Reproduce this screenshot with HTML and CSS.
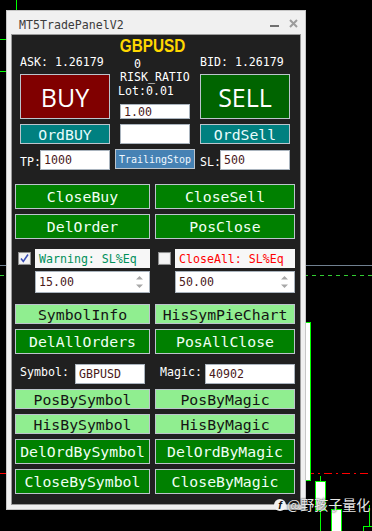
FILE: index.html
```html
<!DOCTYPE html>
<html lang="en">

<head>
    <meta charset="UTF-8">
    <meta name="viewport" content="width=device-width, initial-scale=1.0">
    <title>MT5TradePanelV2</title>
    <link rel="stylesheet" href="styles.css">
</head>

<body>
    <div class="desk">
        <!-- chart behind the panel -->
        <div class="cl ln-top"></div>
        <div class="cl candle-left"></div>
        <div class="cl ln-gray"></div>
        <div class="cl ln-dash"></div>
        <div class="cl ln-red"></div>
        <div class="cl candle c1"></div>
        <div class="cl wick w2"></div>
        <div class="cl candle c2"></div>
        <div class="cl wick w3"></div>
        <div class="cl candle c3"></div>
        <div class="cl wick w4"></div>
        <div class="cl candle c4"></div>

        <div class="window">
            <div class="titlebar">
                <span class="title">MT5TradePanelV2</span>
                <span class="min"></span>
                <svg class="close" width="9" height="9" viewBox="0 0 9 9">
                    <path d="M1 1 L8 8 M8 1 L1 8" stroke="#9c9c9c" stroke-width="2" />
                </svg>
            </div>

            <div class="client">
                <div class="head"><span>GBPUSD</span></div>

                <div class="top">
                    <div class="txt">ASK: 1.26179</div>
                    <div class="txt spread">0</div>
                    <div class="txt">BID: 1.26179</div>

                    <div class="btn big buy">BUY</div>
                    <div class="mid">
                        <div class="txt">RISK_RATIO</div>
                        <div class="txt lot">Lot:0.01</div>
                        <div class="inp small">1.00</div>
                    </div>
                    <div class="btn big sell">SELL</div>

                    <div class="btn teal">OrdBUY</div>
                    <div class="inp"></div>
                    <div class="btn teal">OrdSell</div>

                    <div class="field"><span class="txt">TP:</span><div class="inp">1000</div></div>
                    <div class="btn trail">TrailingStop</div>
                    <div class="field"><span class="txt">SL:</span><div class="inp">500</div></div>
                </div>

                <div class="grid2 actions">
                    <div class="btn act">CloseBuy</div>
                    <div class="btn act">CloseSell</div>
                    <div class="btn act">DelOrder</div>
                    <div class="btn act">PosClose</div>
                </div>

                <div class="grid2 checks">
                    <div class="chk">
                        <svg class="box" width="13" height="13" viewBox="0 0 13 13">
                            <rect x="0.5" y="0.5" width="12" height="12" fill="#e6e6e6" stroke="#8e8f8f" />
                            <rect x="1.5" y="1.5" width="10" height="10" fill="#f4f4f4" />
                            <path d="M3 6.5 L5.3 9.5 L10 2.5" fill="none" stroke="#3b4fb5" stroke-width="1.6" />
                        </svg>
                        <div class="chk-body">
                            <div class="tag warn">Warning: SL%Eq</div>
                            <div class="inp spin">15.00
                                <svg width="7" height="14" viewBox="0 0 7 14">
                                    <path d="M3.5 1 L7 4.5 L0 4.5 Z M0 9.5 L7 9.5 L3.5 13 Z" fill="#a8a8a8" />
                                </svg>
                            </div>
                        </div>
                    </div>
                    <div class="chk">
                        <svg class="box" width="13" height="13" viewBox="0 0 13 13">
                            <rect x="0.5" y="0.5" width="12" height="12" fill="#e6e6e6" stroke="#8e8f8f" />
                            <rect x="1.5" y="1.5" width="10" height="10" fill="#f4f4f4" />
                        </svg>
                        <div class="chk-body">
                            <div class="tag closeall">CloseAll: SL%Eq</div>
                            <div class="inp spin">50.00
                                <svg width="7" height="14" viewBox="0 0 7 14">
                                    <path d="M3.5 1 L7 4.5 L0 4.5 Z M0 9.5 L7 9.5 L3.5 13 Z" fill="#a8a8a8" />
                                </svg>
                            </div>
                        </div>
                    </div>
                </div>

                <div class="grid2 tools">
                    <div class="btn lite">SymbolInfo</div>
                    <div class="btn lite">HisSymPieChart</div>
                    <div class="btn act">DelAllOrders</div>
                    <div class="btn act">PosAllClose</div>
                </div>

                <div class="grid2 symrow">
                    <div class="symcell">
                        <span class="txt">Symbol:</span>
                        <div class="inp sym">GBPUSD</div>
                    </div>
                    <div class="symcell">
                        <span class="txt">Magic:</span>
                        <div class="inp magic">40902</div>
                    </div>
                </div>

                <div class="grid2 bysym">
                    <div class="btn lite">PosBySymbol</div>
                    <div class="btn lite">PosByMagic</div>
                    <div class="btn lite">HisBySymbol</div>
                    <div class="btn lite">HisByMagic</div>
                    <div class="btn act">DelOrdBySymbol</div>
                    <div class="btn act">DelOrdByMagic</div>
                    <div class="btn act">CloseBySymbol</div>
                    <div class="btn act">CloseByMagic</div>
                </div>
            </div>
        </div>

        <div class="mark"><span class="mark-logo">f</span>@野孩子量化</div>
    </div>
</body>

</html>
```

FILE: styles.css
```css
body {
    margin: 0;
    background-color: #000;
    font-family: "DejaVu Sans Mono", monospace;
}

.desk {
    position: relative;
    width: 372px;
    height: 531px;
    padding: 10px 0 0 6px;
    box-sizing: border-box;
    overflow: hidden;
}

/* chart lines */
.cl {
    position: absolute;
}

.ln-top {
    left: 16px;
    top: 0;
    width: 1px;
    height: 12px;
    background-color: #00ff00;
}

.candle-left {
    left: -6px;
    top: 39px;
    width: 11px;
    height: 31px;
    border: 1px solid #00ff00;
}

.ln-gray {
    left: 0;
    right: 0;
    top: 265px;
    height: 1px;
    background-color: #708090;
}

.ln-dash {
    left: 0;
    right: 0;
    top: 275px;
    height: 1px;
    background: repeating-linear-gradient(90deg, #32cd32 0 4px, transparent 4px 8px);
}

.ln-red {
    left: 0;
    right: 0;
    top: 473px;
    height: 1px;
    background: repeating-linear-gradient(90deg, #ff0000 0 8px, transparent 8px 12px, #ff0000 12px 14px, transparent 14px 18px);
}

.candle {
    background-color: #fff;
    border: 1px solid #00ff00;
}

.wick {
    width: 1px;
    background-color: #00ff00;
}

.c1 {
    left: 304px;
    top: 322px;
    width: 5px;
    height: 157px;
}

.w2 {
    left: 320px;
    top: 476px;
    height: 55px;
}

.c2 {
    left: 315px;
    top: 481px;
    width: 9px;
    height: 28px;
}

.w3 {
    left: 336px;
    top: 503px;
    height: 28px;
}

.c3 {
    left: 331px;
    top: 509px;
    width: 9px;
    height: 30px;
}

.w4 {
    left: 369px;
    top: 505px;
    height: 26px;
}

.c4 {
    left: 363px;
    top: 526px;
    width: 14px;
    height: 20px;
    background-color: #000;
}

/* panel window */
.window {
    position: relative;
    width: 300px;
    height: 500px;
    box-sizing: border-box;
    background-color: #f0f0f0;
    border: 1px solid #c6c6c6;
    padding: 0 4px 4px;
    display: flex;
    flex-direction: column;
}

.titlebar {
    height: 23px;
    display: flex;
    align-items: flex-start;
    padding: 0 3px 0 8px;
}

.title {
    margin-top: 7px;
    font-size: 11.6px;
    line-height: 14px;
    color: #3c3c3c;
}

.min {
    margin: 14px 10px 0 auto;
    width: 9px;
    height: 2px;
    background-color: #707070;
}

.close {
    margin-top: 8px;
}

.client {
    flex: 1;
    background-color: #202020;
    border: 1px solid #9a9a9a;
}

.head {
    padding-top: 4px;
    height: 16px;
    line-height: 15px;
    text-align: center;
}

.head span {
    display: inline-block;
    margin-right: 7px;
    font-family: "Liberation Sans", sans-serif;
    font-weight: bold;
    font-size: 18px;
    color: #ffd700;
    transform: scaleX(0.85);
}

.txt {
    font-size: 11.6px;
    line-height: 14px;
    color: #fff;
    white-space: nowrap;
}

.top {
    display: grid;
    grid-template-columns: 90px 70px 90px;
    grid-template-rows: 14px 45px 20px 21px;
    column-gap: 10px;
    row-gap: 5px;
    padding-left: 8px;
}

.spread {
    padding: 2px 0 0 14px;
}

.mid {
    margin-top: -4px;
    display: flex;
    flex-direction: column;
}

.lot {
    margin-left: -2px;
}

.btn {
    box-sizing: border-box;
    border: 1px solid #bcc4cc;
    display: flex;
    align-items: center;
    justify-content: center;
    white-space: nowrap;
}

.big {
    font-family: "Open Sans", sans-serif;
    font-size: 25px;
    color: #fff;
}

.buy {
    background-color: #800000;
}

.sell {
    background-color: #006400;
}

.teal {
    background-color: #008080;
    font-size: 14.8px;
    color: #e8fcfc;
}

.trail {
    margin: 0 -5px;
    height: 20px;
    background-color: #4682b4;
    font-size: 10px;
    color: #f0f8ff;
}

.inp {
    box-sizing: border-box;
    height: 20px;
    background-color: #fff;
    border: 1px solid #aab4be;
    padding-left: 3px;
    display: flex;
    align-items: center;
    font-size: 11.6px;
    color: #4a1a1a;
}

.inp.small {
    margin-top: 6px;
    height: 15px;
}

.field {
    display: flex;
    align-items: flex-start;
}

.field .txt {
    width: 20px;
    padding-top: 6px;
}

.field .inp {
    flex: 1;
    margin-top: 1px;
}

.grid2 {
    display: grid;
    grid-template-columns: 135px 140px;
    gap: 5px;
    padding-left: 3px;
}

.act {
    height: 25px;
    background-color: #008000;
    font-size: 14.8px;
    color: #f0fff4;
}

.lite {
    height: 20px;
    background-color: #90ee90;
    font-size: 14.8px;
    color: #141414;
}

.actions {
    margin-top: 14px;
}

.checks {
    margin-top: 10px;
}

.chk {
    display: flex;
    align-items: flex-start;
}

.box {
    flex: none;
    margin: 3px 4px 0 3px;
}

.chk-body {
    flex: 1;
    display: flex;
    flex-direction: column;
    gap: 3px;
}

.tag {
    height: 19px;
    background-color: #f7f7f7;
    padding-left: 4px;
    display: flex;
    align-items: center;
    font-size: 11.6px;
}

.warn {
    color: #00905a;
}

.closeall {
    color: #ff0000;
}

.spin {
    height: 22px;
    justify-content: space-between;
    padding-right: 6px;
}

.tools {
    margin-top: 11px;
}

.symrow {
    margin-top: 10px;
}

.symcell {
    display: flex;
    align-items: flex-start;
}

.symcell .txt {
    margin-top: 1px;
    padding-left: 5px;
}

.sym {
    margin: 0 5px 0 auto;
    width: 70px;
}

.magic {
    margin-left: auto;
    width: 90px;
}

.bysym {
    margin-top: 5px;
}

/* watermark over everything */
.mark {
    position: absolute;
    left: 274px;
    top: 496px;
    display: flex;
    align-items: center;
    font-family: "Noto Sans CJK SC", sans-serif;
    font-size: 14px;
    line-height: 17px;
    color: #e6e6e6;
    text-shadow: 0 0 2px #000;
}

.mark-logo {
    width: 12px;
    height: 12px;
    margin-right: 1px;
    border-radius: 50%;
    background-color: #f2f2f2;
    color: #111;
    font-family: "Liberation Sans", sans-serif;
    font-weight: bold;
    font-style: italic;
    font-size: 11px;
    line-height: 12px;
    text-align: center;
    text-shadow: none;
}
```
